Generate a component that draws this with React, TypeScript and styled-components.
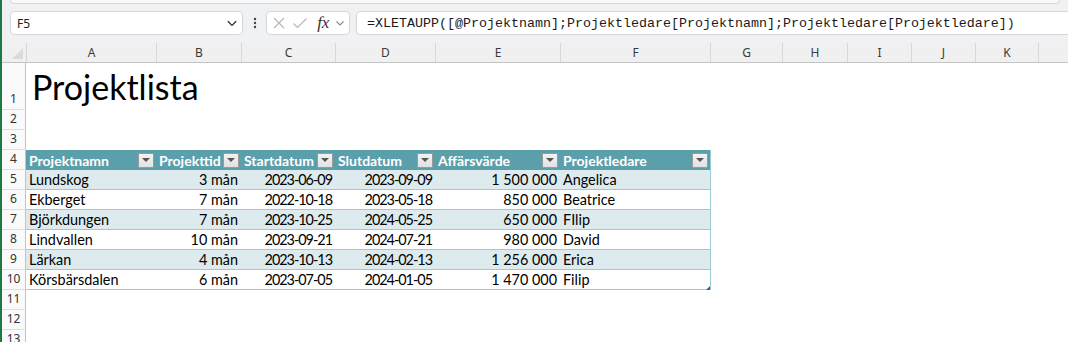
import styled, { createGlobalStyle } from "styled-components";

const GlobalStyle = createGlobalStyle`
    body {
        margin: 0;
        font-family: Lato, "Liberation Sans", sans-serif;
    }
`;

const Window = styled.div`
    width: 1066px;
    height: 342px;
    overflow: hidden;
    border-left: 2px solid #1d7a45;
    background: #eff1f3;
    display: flex;
    flex-direction: column;
    & > * {
        flex-shrink: 0;
    }
`;

const RibbonEdge = styled.div`
    height: 3px;
    margin: 0 8px;
    background: #f9f9f9;
    border: 1px solid #d6d8db;
    border-top: none;
    border-radius: 0 0 6px 6px;
`;

const FormulaBar = styled.div`
    display: flex;
    align-items: center;
    height: 24px;
    margin-top: 7px;
    padding-left: 8px;
`;

const Box = styled.div`
    height: 24px;
    flex-shrink: 0;
    box-sizing: border-box;
    background: #fff;
    border: 1px solid #d4d6d9;
    border-radius: 4px;
    display: flex;
    align-items: center;
`;

const NameBox = styled(Box)`
    width: 233px;
    padding: 0 4px 0 6px;
    justify-content: space-between;
    font-family: "Noto Sans", sans-serif;
    font-size: 12px;
    color: #222;
`;

const Dots = styled.div`
    width: 23px;
    flex-shrink: 0;
    display: flex;
    justify-content: center;
`;

const ButtonGroup = styled(Box)`
    width: 84px;
    padding: 0 4px 0 5px;
    justify-content: space-between;
    margin-right: 6px;
`;

const Fx = styled.span`
    font-family: "Liberation Serif", serif;
    font-style: italic;
    font-size: 17px;
    color: #333;
    margin-left: 4px;
`;

const FormulaBox = styled(Box)`
    flex: 1 0 auto;
    margin-right: -6px;
    padding-left: 10px;
    font-family: "Liberation Mono", monospace;
    font-size: 13.33px;
    color: #1a1a1a;
    white-space: nowrap;
`;

const Sheet = styled.div`
    margin-top: 8px;
    height: 300px;
    background: #fff;
    font-family: Lato, sans-serif;
`;

const ColHeaderRow = styled.div`
    display: flex;
    height: 19px;
    background: #f0f0f0;
    border-bottom: 1px solid #c4c4c4;
`;

const Corner = styled.div`
    width: 24px;
    flex-shrink: 0;
    border-right: 1px solid #d6d6d6;
    position: relative;
    &::after {
        content: "";
        position: absolute;
        right: 3px;
        bottom: 3px;
        border-left: 11px solid transparent;
        border-bottom: 11px solid #dadada;
    }
`;

const ColHeader = styled.div<{ $w: number }>`
    width: ${(p) => p.$w - 1}px;
    flex-shrink: 0;
    border-right: 1px solid #d8d8d8;
    display: flex;
    align-items: center;
    justify-content: center;
    font-family: "Noto Sans", sans-serif;
    font-size: 12px;
    color: #3b3b3b;
`;

const Row = styled.div<{ $h: number }>`
    display: flex;
    height: ${(p) => p.$h}px;
`;

const RowNum = styled.div<{ $h: number }>`
    width: 24px;
    height: ${(p) => p.$h}px;
    flex-shrink: 0;
    box-sizing: border-box;
    background: #fafafa;
    border-right: 1px solid #c4c4c4;
    border-bottom: 1px solid #dedede;
    display: flex;
    align-items: flex-end;
    justify-content: center;
    padding-bottom: 2px;
    font-family: "Noto Sans", sans-serif;
    font-size: 12px;
    color: #333;
`;

const Title = styled.div`
    padding: 0 0 2px 6px;
    align-self: flex-end;
    font-size: 34px;
    line-height: 42px;
    color: #000;
`;

const Table = styled.div`
    width: 684px;
    position: relative;
    border-right: 1px solid #9ccbd4;
`;

const TableRow = styled.div<{ $band: boolean }>`
    display: flex;
    height: 19px;
    background: ${(p) => (p.$band ? "#ddebee" : "#fff")};
    border-bottom: 1px solid #9ccbd4;
`;

const HeadRow = styled.div`
    display: flex;
    height: 20px;
    background: #5b9fab;
`;

const HeadCell = styled.div<{ $w: number }>`
    width: ${(p) => p.$w}px;
    flex-shrink: 0;
    box-sizing: border-box;
    display: flex;
    align-items: center;
    justify-content: space-between;
    padding: 0 2px 0 3px;
    color: #fff;
    font-weight: 700;
    font-size: 14px;
    white-space: nowrap;
`;

const FilterButton = styled.div`
    width: 16px;
    height: 15px;
    flex-shrink: 0;
    box-sizing: border-box;
    background: linear-gradient(#f2f2f2, #e2e2e2);
    border: 1px solid #9a9a9a;
    display: flex;
    align-items: center;
    justify-content: center;
    &::after {
        content: "";
        border-left: 4px solid transparent;
        border-right: 4px solid transparent;
        border-top: 4px solid #555;
    }
`;

const Cell = styled.div<{ $w: number; $right?: boolean; $date?: boolean }>`
    width: ${(p) => p.$w}px;
    flex-shrink: 0;
    box-sizing: border-box;
    padding: 1px 3px 0;
    text-align: ${(p) => (p.$right ? "right" : "left")};
    font-size: 14.4px;
    line-height: 18px;
    letter-spacing: ${(p) => (p.$date ? "-1px" : "0")};
    color: #000;
    white-space: nowrap;
`;

const ResizeHandle = styled.div`
    position: absolute;
    right: 0;
    bottom: 0;
    border-left: 4px solid transparent;
    border-bottom: 4px solid #3a57a8;
`;

const Chevron = ({ size = 10, color = "#444" }: { size?: number; color?: string }) => (
    <svg width={size} height={size} viewBox="0 0 10 10">
        <path d="M1.5 3.5 L5 7 L8.5 3.5" fill="none" stroke={color} strokeWidth="1.1" />
    </svg>
);

// last column (L) is mostly off-screen, its letter is not visible
const colWidths = [130, 85, 94, 100, 125, 150, 72, 65, 64, 64, 63, 64];
const letters = ["A", "B", "C", "D", "E", "F", "G", "H", "I", "J", "K", ""];
const heads = ["Projektnamn", "Projekttid", "Startdatum", "Slutdatum", "Affärsvärde", "Projektledare"];
const rightAligned = [false, true, true, true, true, false];
const dateCols = [false, false, true, true, false, false];

const data = [
    ["Lundskog", "3 mån", "2023-06-09", "2023-09-09", "1 500 000", "Angelica"],
    ["Ekberget", "7 mån", "2022-10-18", "2023-05-18", "850 000", "Beatrice"],
    ["Björkdungen", "7 mån", "2023-10-25", "2024-05-25", "650 000", "FIlip"],
    ["Lindvallen", "10 mån", "2023-09-21", "2024-07-21", "980 000", "David"],
    ["Lärkan", "4 mån", "2023-10-13", "2024-02-13", "1 256 000", "Erica"],
    ["Körsbärsdalen", "6 mån", "2023-07-05", "2024-01-05", "1 470 000", "Filip"],
];

const RowNums = styled.div`
    display: flex;
    flex-direction: column;
    flex-shrink: 0;
`;

const Body = styled.div`
    display: flex;
`;

const Column = styled.div`
    display: flex;
    flex-direction: column;
`;

const Spacer = styled.div<{ $h: number }>`
    height: ${(p) => p.$h}px;
`;

const rowHeights = [47, 20, 20, 20, 20, 20, 20, 20, 20, 20, 20, 20, 20];

const App = () => (
    <Window>
        <GlobalStyle />
        <RibbonEdge />
        <FormulaBar>
            <NameBox>
                <span>F5</span>
                <Chevron size={12} color="#333" />
            </NameBox>
            <Dots>
                <svg width="4" height="12" viewBox="0 0 4 12">
                    <circle cx="2" cy="2" r="1.2" fill="#444" />
                    <circle cx="2" cy="6" r="1.2" fill="#444" />
                    <circle cx="2" cy="10" r="1.2" fill="#444" />
                </svg>
            </Dots>
            <ButtonGroup>
                <svg width="14" height="14" viewBox="0 0 14 14">
                    <path d="M2 2 L12 12 M12 2 L2 12" stroke="#b5b5b5" strokeWidth="1.1" />
                </svg>
                <svg width="16" height="14" viewBox="0 0 16 14">
                    <path d="M1.5 7.5 L5.5 11.5 L14.5 2.5" fill="none" stroke="#b5b5b5" strokeWidth="1.1" />
                </svg>
                <Fx>fx</Fx>
                <Chevron size={10} color="#888" />
            </ButtonGroup>
            <FormulaBox>=XLETAUPP([@Projektnamn];Projektledare[Projektnamn];Projektledare[Projektledare])</FormulaBox>
        </FormulaBar>
        <Sheet>
            <ColHeaderRow>
                <Corner />
                {colWidths.map((w, i) => (
                    <ColHeader key={i} $w={w}>
                        {letters[i]}
                    </ColHeader>
                ))}
            </ColHeaderRow>
            <Body>
                <RowNums>
                    {rowHeights.map((h, i) => (
                        <RowNum key={i} $h={h}>
                            {i + 1}
                        </RowNum>
                    ))}
                </RowNums>
                <Column>
                    <Row $h={47}>
                        <Title>Projektlista</Title>
                    </Row>
                    <Spacer $h={40} />
                    <Table>
                        <HeadRow>
                            {heads.map((h, i) => (
                                <HeadCell key={h} $w={colWidths[i]}>
                                    {h}
                                    <FilterButton />
                                </HeadCell>
                            ))}
                        </HeadRow>
                        {data.map((row, r) => (
                            <TableRow key={row[0]} $band={r % 2 === 0}>
                                {row.map((v, c) => (
                                    <Cell key={c} $w={colWidths[c]} $right={rightAligned[c]} $date={dateCols[c]}>
                                        {v}
                                    </Cell>
                                ))}
                            </TableRow>
                        ))}
                        <ResizeHandle />
                    </Table>
                </Column>
            </Body>
        </Sheet>
    </Window>
);

export default App;
